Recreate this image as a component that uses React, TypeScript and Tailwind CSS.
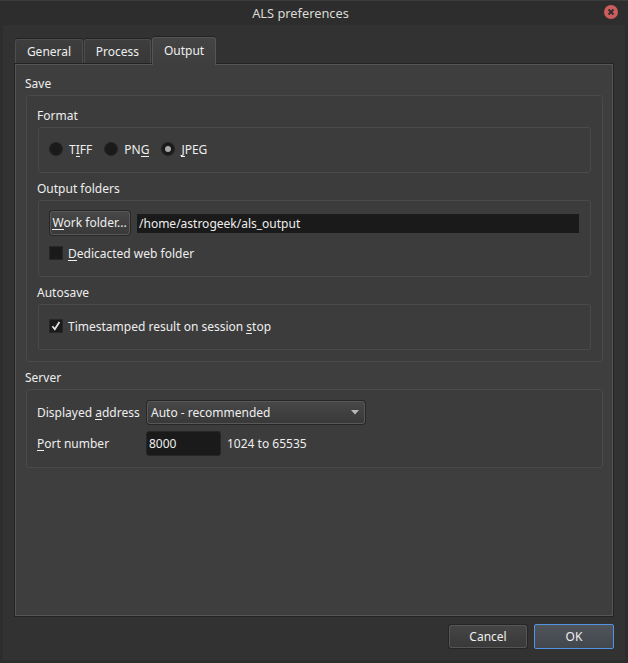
import { useState, type ReactNode } from 'react';

const TABS = [
  { name: 'General', width: 'w-[68px]' },
  { name: 'Process', width: 'w-[67px]' },
  { name: 'Output', width: 'w-[64px]' },
];
const FORMATS = [
  { id: 'tiff', label: <>T<Key>I</Key>FF</>, gap: 'mr-[12px]' },
  { id: 'png', label: <>PN<Key>G</Key></>, gap: 'mr-[12px]' },
  { id: 'jpeg', label: <><Key>J</Key>PEG</>, gap: '' },
];

// keyboard accelerator letter
function Key({ children }: { children: ReactNode }) {
  return <span className="inline-block h-[16px] border-b border-[#eeeeee] leading-[18px]">{children}</span>;
}

function Group({ title, className = '', children }: { title: string; className?: string; children: ReactNode }) {
  return (
    <section>
      <h2 className="-ml-px h-[20px] leading-[18px]">{title}</h2>
      <div className={`rounded-[3px] border border-[#4a4a4a] bg-[#3c3c3c] ${className}`}>{children}</div>
    </section>
  );
}

function CheckBox({ checked, onChange, children }: { checked: boolean; onChange: () => void; children: ReactNode }) {
  return (
    <button onClick={onChange} className="flex h-[18px] items-center">
      <span className="mr-[5px] mb-[2px] flex h-[14px] w-[14px] items-center justify-center border border-[#272727] bg-[#1a1a1a]">
        {checked && (
          <svg width="10" height="10" viewBox="0 0 10 10" fill="none" stroke="#e4e4e4" strokeWidth="1.8">
            <path d="M1.4 5.2 3.8 8.2 8.4 1" />
          </svg>
        )}
      </span>
      <span className="h-[18px] leading-[18px]">{children}</span>
    </button>
  );
}

export default function App() {
  const [tab, setTab] = useState('Output');
  const [format, setFormat] = useState('jpeg');
  const [web, setWeb] = useState(false);
  const [autosave, setAutosave] = useState(true);
  const [port, setPort] = useState('8000');

  return (
    <div className="flex h-[663px] w-[628px] flex-col overflow-hidden bg-[#2d2d2d] font-['Noto_Sans',sans-serif] text-[12px] whitespace-nowrap text-[#eeeeee]">
      <header className="flex h-[25px] shrink-0 items-start border-t border-[#3b3b3b] bg-[#2d2d2d] pr-[10px]">
        <h1 className="-ml-[3px] flex-1 pt-[3px] text-center text-[12.8px] leading-[18px] text-[#dadad5]">ALS preferences</h1>
        <button aria-label="Close" className="mt-[4px]">
          <svg width="14" height="14" viewBox="0 0 14 14">
            <circle cx="7" cy="7" r="7" fill="#cc5d5d" />
            <path d="M4.5 4.5 9.5 9.5M9.5 4.5 4.5 9.5" stroke="#2d2d2d" strokeWidth="1.8" />
          </svg>
        </button>
      </header>

      <main className="mr-[3px] mb-[3px] ml-[3px] flex flex-1 flex-col bg-[#323232] pt-[12px] pr-[12px] pl-[12px]">
        <nav className="z-10 flex h-[28px] items-end gap-px">
          {TABS.map((t) => (
            <button
              key={t.name}
              onClick={() => setTab(t.name)}
              className={`${t.width} ${
                t.name === tab
                  ? 'h-[28px] rounded-t-[3px] border border-b-0 border-[#555555] bg-linear-to-b from-[#444444] to-[#3e3e3e] pb-[2px] shadow-[0_-1px_0_#222222]'
                  : 'mb-[2px] h-[24px] rounded-t-[3px] border border-b-0 border-[#4d4d4d] bg-linear-to-b from-[#3e3e3e] to-[#383838] shadow-[0_-1px_0_#222222]'
              }`}
            >
              {t.name}
            </button>
          ))}
        </nav>

        <div className="-mt-px h-[552px] w-[598px] border border-[#555555] bg-[#3e3e3e] pt-[10px] pr-[9px] pl-[10px] shadow-[0_0_0_1px_#232323]">
          <Group title="Save" className="mb-[7px] h-[267px] px-[11px] pt-[11px]">
            <Group title="Format" className="mb-[7px] flex h-[46px] items-center pl-[10px]">
              {FORMATS.map((f) => (
                <button key={f.id} onClick={() => setFormat(f.id)} className={`-mt-px flex items-center ${f.gap}`}>
                  <span className="mr-[6px] mb-[2px] flex h-[14px] w-[14px] items-center justify-center rounded-full border border-[#252525] bg-[#1a1a1a]">
                    {format === f.id && <span className="h-[6px] w-[6px] rounded-full bg-[#a9a9a9]" />}
                  </span>
                  <span className="h-[18px] leading-[18px]">{f.label}</span>
                </button>
              ))}
            </Group>
            <Group title="Output folders" className="mb-[7px] h-[77px] pt-[10px] pr-[11px] pl-[10px]">
              <div className="mb-[10px] flex items-center">
                <button className="ml-px h-[24px] w-[80px] rounded-[3px] border border-[#585858] bg-linear-to-b from-[#474747] to-[#393939] shadow-[0_0_0_1px_#272727]">
                  <span className="-ml-px block h-[20px] leading-[20px]">
                    <Key>W</Key>ork folder...
                  </span>
                </button>
                <div className="ml-[7px] h-[19px] flex-1 bg-[#1a1a1a] pl-[2px] leading-[19px]">/home/astrogeek/als_output</div>
              </div>
              <CheckBox checked={web} onChange={() => setWeb(!web)}>
                <Key>D</Key>edicacted web folder
              </CheckBox>
            </Group>
            <Group title="Autosave" className="flex h-[46px] items-center pl-[10px]">
              <CheckBox checked={autosave} onChange={() => setAutosave(!autosave)}>
                Timestamped result on session <Key>s</Key>top
              </CheckBox>
            </Group>
          </Group>

          <Group title="Server" className="h-[79px] pt-[10px] pl-[10px]">
            <div className="flex h-[25px] items-center">
              <label className="h-[18px] w-[110px] leading-[18px]">
                Displayed <Key>a</Key>ddress
              </label>
              <button className="flex h-[23px] w-[218px] items-center justify-between rounded-[3px] border border-[#585858] bg-linear-to-b from-[#474747] to-[#393939] pr-[5px] pl-[3px] shadow-[0_0_0_1px_#272727]">
                Auto - recommended
                <svg width="8" height="5" viewBox="0 0 8 5">
                  <path d="M0 0H8L4 4.5Z" fill="#b8b8b8" />
                </svg>
              </button>
            </div>
            <div className="mt-[6px] flex h-[25px] items-center">
              <label className="h-[18px] w-[109px] leading-[18px]">
                <Key>P</Key>ort number
              </label>
              <input
                value={port}
                onChange={(e) => setPort(e.target.value)}
                className="h-[25px] w-[75px] rounded-[3px] border border-[#262626] bg-[#1a1a1a] pl-[2px] outline-none"
              />
              <span className="ml-[6px] h-[18px] leading-[18px]">1024 to 65535</span>
            </div>
          </Group>
        </div>

        <footer className="mt-[8px] -mr-px flex items-center justify-end gap-[7px]">
          <button className="h-[23px] w-[78px] rounded-[2px] border border-[#555555] bg-linear-to-b from-[#454545] to-[#393939] shadow-[0_0_0_1px_#262626]">
            Cancel
          </button>
          <button className="h-[25px] w-[80px] rounded-[2px] border border-[#5294e2] bg-linear-to-b from-[#50545b] to-[#43474d]">
            OK
          </button>
        </footer>
      </main>
    </div>
  );
}
